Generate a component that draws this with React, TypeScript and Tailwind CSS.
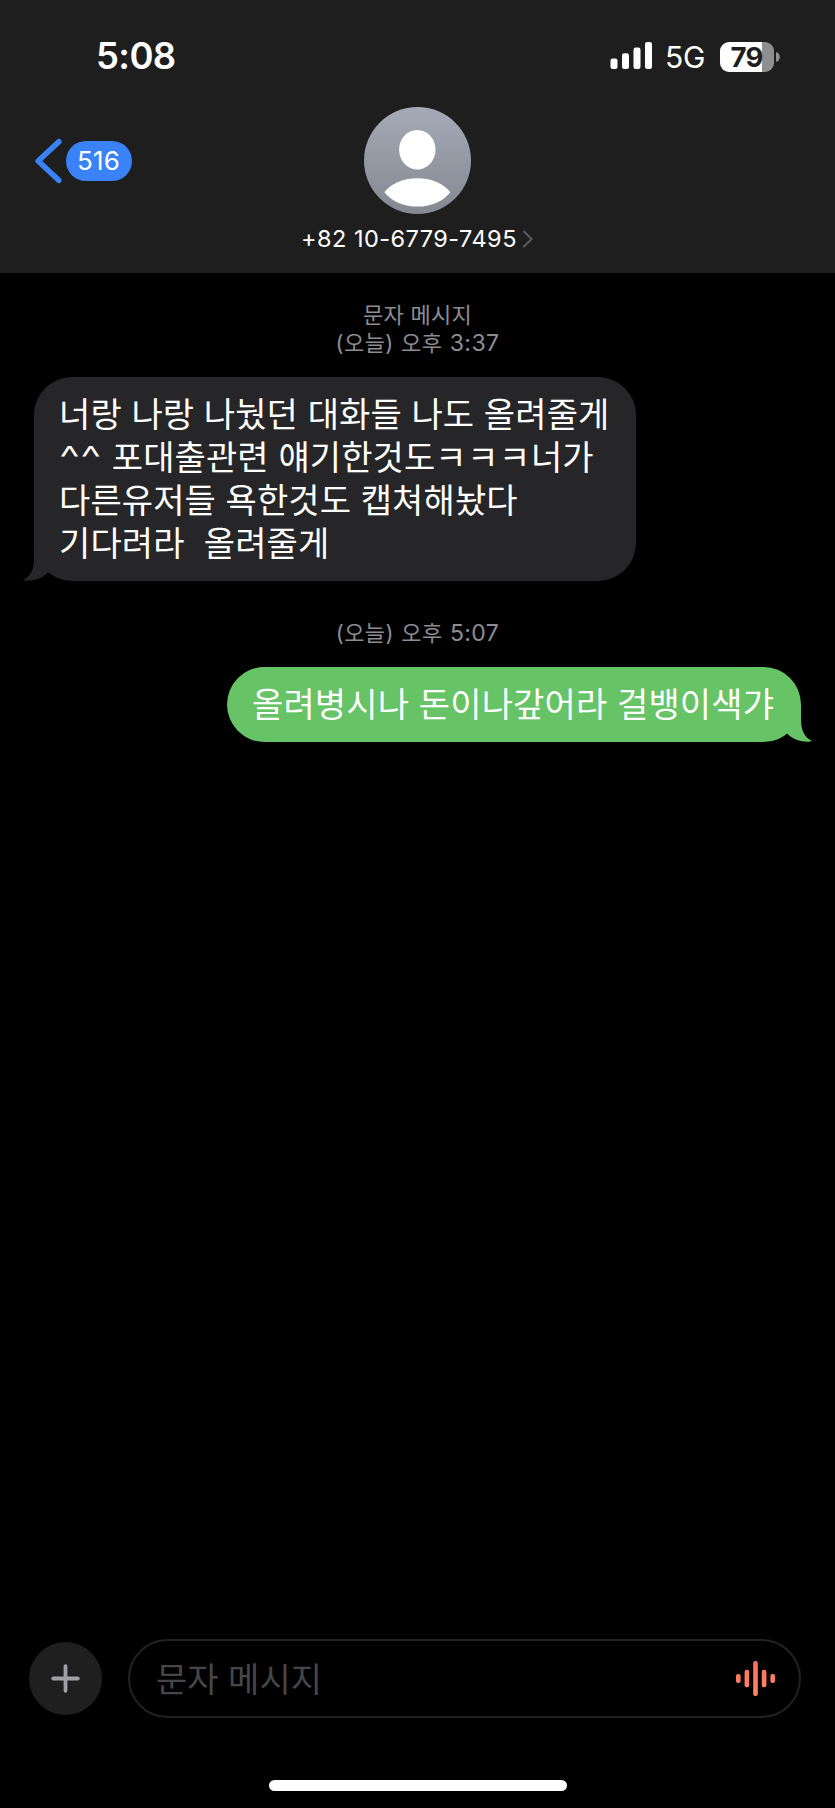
import React from "react";

const waveBars = [
  { x: 0, h: 9 },
  { x: 8.6, h: 17.5 },
  { x: 17.2, h: 35 },
  { x: 25.8, h: 17.5 },
  { x: 34.4, h: 9 },
];

function StatusBar() {
  return (
    <div className="flex h-[107px] items-start justify-between pl-[96px] pr-[55px]">
      <time className="mt-[34px] text-[36.5px] leading-[44px] font-semibold tracking-[-0.6px]">5:08</time>
      <div className="flex pt-[40px]">
        <svg className="mt-[2px] h-[27px] w-[43px]" viewBox="0 0 43 27" fill="white">
          <rect x="0.5" y="16.4" width="7" height="10.6" rx="2.2" />
          <rect x="12" y="11.2" width="7" height="15.8" rx="2.2" />
          <rect x="23.5" y="5.6" width="7" height="21.4" rx="2.2" />
          <rect x="35" y="0" width="7" height="27" rx="2.2" />
        </svg>
        <span className="ml-[12px] w-[41px] text-[30px] leading-[34px] tracking-[-0.2px]">5G</span>
        <div className="ml-[14px] flex items-center">
          <div className="flex h-[30px] w-[54px] items-center justify-center rounded-[9px] bg-[linear-gradient(90deg,#ffffff_42px,#8f8f8f_42px)] text-[27.5px] leading-[30px] font-bold tracking-[-0.8px] text-[#1e1e1e]">
            <span className="-ml-px">79</span>
          </div>
          <svg className="ml-[2px] h-[10px] w-[4px]" viewBox="0 0 4 10">
            <path d="M0 0C5 1 5 9 0 10Z" fill="#8f8f8f" />
          </svg>
        </div>
      </div>
    </div>
  );
}

function Header() {
  return (
    <header className="h-[273px] bg-[#1e1e1e]">
      <StatusBar />
      <div className="grid grid-cols-[1fr_107px_1fr]">
        <button className="mt-[31px] flex h-[46px] items-center pl-[35px]">
          <svg className="h-[46px] w-[27px]" viewBox="0 0 27 46" fill="none">
            <path d="M23.8 3.7L3.2 23L23.8 42.3" stroke="#3a82f7" strokeWidth="5.6" strokeLinecap="round" strokeLinejoin="round" />
          </svg>
          <span className="ml-[3.5px] flex h-[40px] w-[66px] items-center justify-center rounded-full bg-[#3a82f7] text-[26px] leading-none tracking-[0.2px]">516</span>
        </button>
        <svg className="size-[107px]" viewBox="0 0 107 107">
          <defs>
            <linearGradient id="avatar" x1="0" y1="0" x2="0" y2="1">
              <stop offset="0" stopColor="#a6aab7" />
              <stop offset="1" stopColor="#848891" />
            </linearGradient>
          </defs>
          <circle cx="53.5" cy="53.5" r="53.5" fill="url(#avatar)" />
          <ellipse cx="53.3" cy="42.7" rx="18.2" ry="19.8" fill="white" />
          <path d="M20.3 85.2C27 77 38 71.3 53.3 71.3S79.8 77 86.3 85.2C79 94.5 66.5 99.6 53.3 99.6S28 94.5 20.3 85.2Z" fill="white" />
        </svg>
      </div>
      <div className="mt-[11px] flex items-center justify-center pr-[1px]">
        <span className="text-[23.5px] leading-[28px] tracking-[0.46px]">+82 10-6779-7495</span>
        <svg className="ml-[6px] h-[18px] w-[10px]" viewBox="0 0 10 18" fill="none">
          <path d="M1 1.5L8.5 9L1 16.5" stroke="#5a5a5e" strokeWidth="2" strokeLinecap="round" />
        </svg>
      </div>
    </header>
  );
}

function Tail({ className }: { className: string }) {
  return (
    <svg className={className} viewBox="0 0 40 36">
      <path d="M11 0V14C11 24 7.5 31.5 0 35C3 36.3 16 36.8 25 27.5L40 16V0Z" fill="currentColor" />
    </svg>
  );
}

export default function App() {
  return (
    <div className="flex h-[1808px] w-[835px] flex-col overflow-hidden bg-black font-[Inter,'Noto_Sans_CJK_KR',sans-serif] text-white">
      <Header />
      <main className="flex flex-1 flex-col">
        <div className="mt-[28px] text-center text-[22px] leading-[28px] text-[#8d8d92]">
          <p className="tracking-[0.25px]">문자 메시지</p>
          <p className="tracking-[0.4px] [word-spacing:0.8px]">(오늘) 오후 <span className="text-[23px] tracking-[0.4px]">3:37</span></p>
        </div>
        <div className="relative mt-[20px] ml-[34px] h-[204px] w-[602px] rounded-[38px] bg-[#262628] pt-[16px] pl-[25px] text-[34px] leading-[43px] tracking-[0.1px] whitespace-pre">
          <Tail className="absolute bottom-0 -left-[11px] h-[36px] w-[40px] text-[#262628]" />
          <div className="relative">
            <p>너랑 나랑 나눴던 대화들 나도 올려줄게</p>
            <p><span className="mr-[12.5px] inline-block origin-left scale-x-[1.38] font-light">^^</span> 포대출관련 얘기한것도<span className="tracking-[0.6px]">ㅋㅋㅋ</span>너가</p>
            <p>다른유저들 욕한것도 캡쳐해놨다</p>
            <p>기다려라  올려줄게</p>
          </div>
        </div>
        <p className="mt-[38px] text-center text-[22px] leading-[28px] tracking-[0.4px] text-[#8d8d92] [word-spacing:0.8px]">(오늘) 오후 <span className="text-[23px] tracking-[0.4px]">5:07</span></p>
        <div className="relative mt-[20px] mr-[34px] h-[75px] w-[574px] self-end rounded-[37.5px] bg-[#66c466] pt-[16px] pl-[25px] text-[34px] leading-[43px] tracking-[0.14px] whitespace-pre">
          <Tail className="absolute -right-[11px] bottom-0 h-[36px] w-[40px] -scale-x-100 text-[#66c466]" />
          <p className="relative">올려병시나 돈이나갚어라 걸뱅이색갸</p>
        </div>
      </main>
      <footer className="h-[169px]">
        <div className="flex items-center pl-[29px]">
          <button className="flex size-[73px] items-center justify-center rounded-full bg-[#1f1f1f]">
            <svg className="size-[29px]" viewBox="0 0 29 29" stroke="#a0a0a4" strokeWidth="3.8" strokeLinecap="round">
              <path d="M14.5 2.2V26.8M2.2 14.5H26.8" />
            </svg>
          </button>
          <div className="ml-[26px] flex h-[79px] w-[673px] items-center justify-between rounded-full border-2 border-[#222223] pr-[24px] pl-[26px]">
            <span className="pt-[1px] text-[34px] leading-[43px] text-[#464648]">문자 메시지</span>
            <svg className="h-[35px] w-[39px]" viewBox="0 0 39 35">
              <defs>
                <linearGradient id="wave" gradientUnits="userSpaceOnUse" x1="0" y1="0" x2="0" y2="35">
                  <stop offset="0" stopColor="#ff6f61" />
                  <stop offset="1" stopColor="#ff8760" />
                </linearGradient>
              </defs>
              {waveBars.map((b) => (
                <rect key={b.x} x={b.x} y={17.5 - b.h / 2} width="4.6" height={b.h} rx="2" fill="url(#wave)" />
              ))}
            </svg>
          </div>
        </div>
        <div className="mx-auto mt-[62px] h-[11px] w-[298px] rounded-full bg-white" />
      </footer>
    </div>
  );
}
